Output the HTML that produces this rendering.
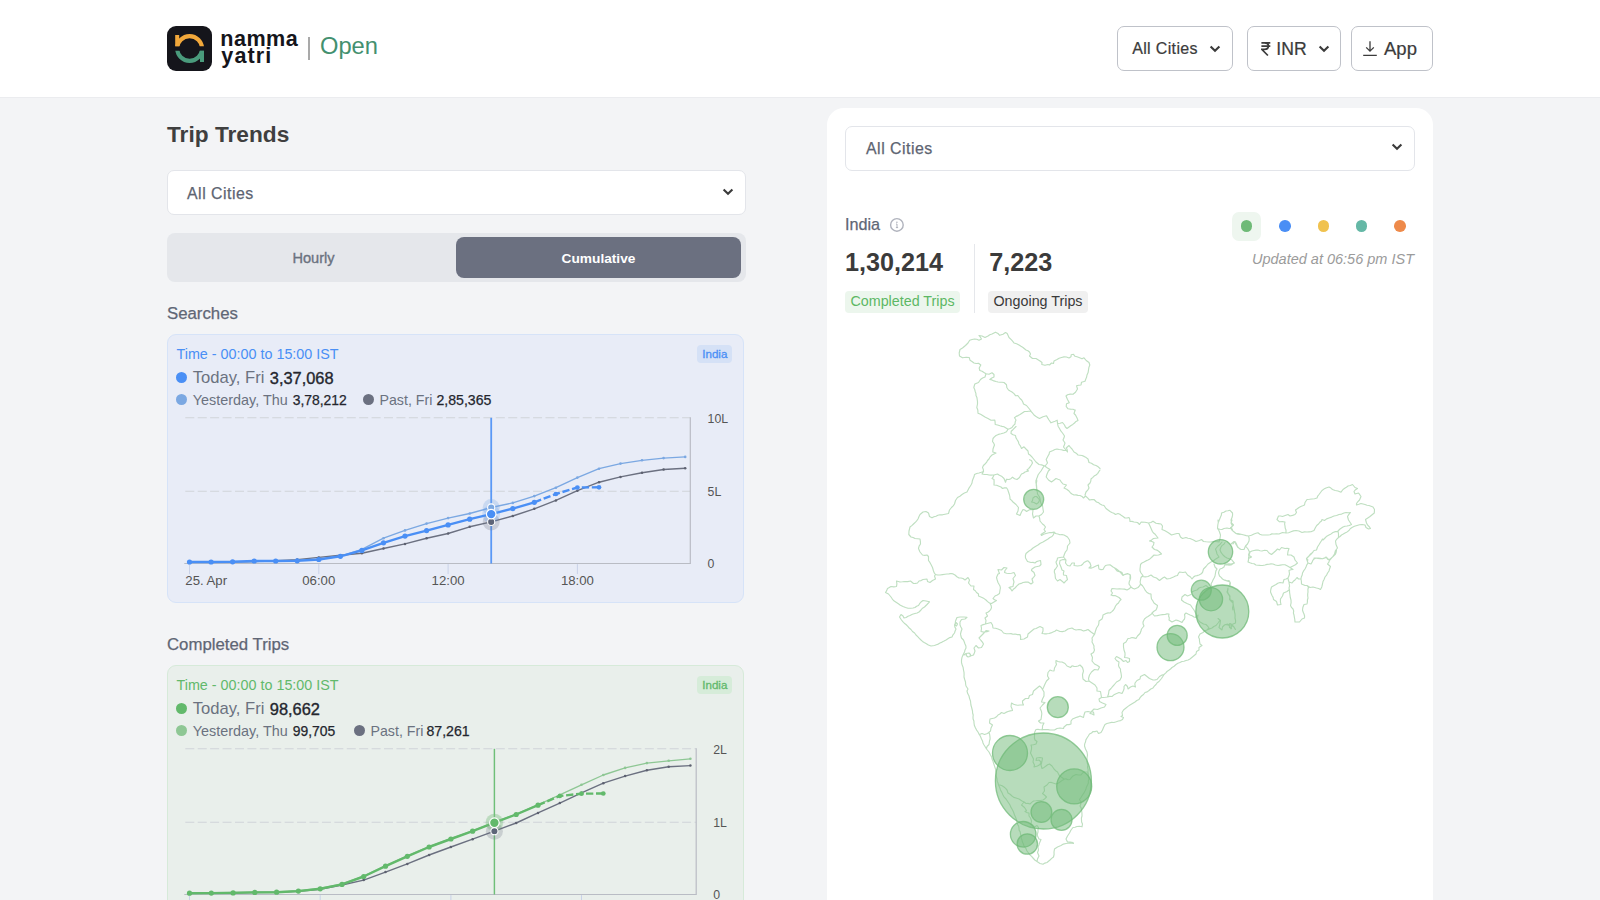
<!DOCTYPE html>
<html lang="en">
<head>
<meta charset="utf-8">
<title>Namma Yatri | Open</title>
<style>
*{box-sizing:border-box;margin:0;padding:0}
html,body{width:1600px;height:900px;overflow:hidden;background:#f3f4f6;font-family:"Liberation Sans",sans-serif;color:#3a3a3a}
#root{position:relative;width:1600px;height:900px;overflow:hidden;background:#f3f4f6}
.abs{position:absolute}
.hdr{position:absolute;left:0;top:0;width:1600px;height:98px;background:#fff;border-bottom:1px solid #ebecef}
.logo{position:absolute;left:167px;top:26px;width:45px;height:45px;border-radius:9px;background:#15151b}
.brand{position:absolute;left:220.3px;font-weight:bold;color:#15151b;font-size:21.6px;line-height:22px;letter-spacing:0.45px;white-space:nowrap}
.hbtn{position:absolute;top:26px;height:45px;border:1.5px solid #bfc2c9;border-radius:7px;background:#fff}
.hbtn span{position:absolute;white-space:nowrap;color:#3b3b3b;-webkit-text-stroke:0.22px #3b3b3b}
.sel{position:absolute;height:45px;background:#fff;border:1px solid #e3e5ea;border-radius:7px}
.sel span{position:absolute;left:19px;top:12.6px;font-size:15.9px;line-height:19px;color:#5d6472;white-space:nowrap;letter-spacing:0.5px;-webkit-text-stroke:0.25px #5d6472}
.lbl{position:absolute;left:167px;font-size:16.8px;line-height:20px;color:#5f6675;white-space:nowrap;-webkit-text-stroke:0.25px #5f6675}
.card{position:absolute;left:167px;width:578px;border-radius:9px}
.t{position:absolute;white-space:nowrap}
.dot{position:absolute;width:11px;height:11px;border-radius:50%}
</style>
</head>
<body>
<div id="root">
<!-- HEADER -->
<div class="hdr">
  <div class="logo">
    <svg width="45" height="45" viewBox="0 0 45 45">
      <defs><clipPath id="ct"><rect x="0" y="0" width="45" height="20.2"/></clipPath><clipPath id="cb"><rect x="0" y="24.8" width="45" height="21"/></clipPath></defs>
      <circle cx="22.6" cy="22.5" r="12.4" fill="none" stroke="#f2a83b" stroke-width="4.1" clip-path="url(#ct)"/>
      <rect x="8.2" y="9" width="4" height="11.2" fill="#f2a83b"/>
      <circle cx="22.6" cy="22.5" r="12.4" fill="none" stroke="#4a9b7c" stroke-width="4.1" clip-path="url(#cb)"/>
      <rect x="33" y="24.8" width="4" height="11.2" fill="#4a9b7c"/>
    </svg>
  </div>
  <div class="brand" style="top:28.3px">namma</div>
  <div class="brand" style="top:45.1px;left:221.3px;letter-spacing:1.1px">yatri</div>
  <div class="abs" style="left:308px;top:37px;width:2px;height:23px;background:#a9a9a9"></div>
  <div class="t" style="left:320px;top:31.6px;font-size:23.7px;line-height:28px;color:#43906f">Open</div>

  <div class="hbtn" style="left:1117px;width:116px">
    <span style="left:14.2px;top:11.6px;font-size:16px;line-height:20px;letter-spacing:0.35px">All Cities</span>
    <svg class="abs" style="left:90px;top:17px" width="14" height="10" viewBox="0 0 14 10"><path d="M2.6 2.4 L7 6.8 L11.4 2.4" fill="none" stroke="#3b3b3b" stroke-width="2.1"/></svg>
  </div>
  <div class="hbtn" style="left:1247px;width:94px">
    <svg class="abs" style="left:12.6px;top:15.1px" width="10" height="14.5" viewBox="0 0 10 14.5"><path d="M0.4 0.9 H9.3 M0.4 4 H9.3 M0.4 0.9 H3.4 C6 0.9 7.4 2.2 7.4 4 C7.4 6 5.8 7.3 3.4 7.3 H0.7 L6.9 13.5" fill="none" stroke="#3b3b3b" stroke-width="1.75"/></svg>
    <span style="left:28.3px;top:11.2px;font-size:17.6px;line-height:22px">INR</span>
    <svg class="abs" style="left:69px;top:17px" width="14" height="10" viewBox="0 0 14 10"><path d="M2.6 2.4 L7 6.8 L11.4 2.4" fill="none" stroke="#3b3b3b" stroke-width="2.1"/></svg>
  </div>
  <div class="hbtn" style="left:1351px;width:82px">
    <svg class="abs" style="left:10.2px;top:13.4px" width="16" height="17" viewBox="0 0 16 17"><path d="M8 1.2 V11 M4.2 7.4 L8 11.2 L11.8 7.4 M1.2 15.4 H14.8" fill="none" stroke="#3b3b3b" stroke-width="1.3"/></svg>
    <span style="left:32px;top:11px;font-size:18.5px;line-height:22px">App</span>
  </div>
</div>

<!-- LEFT COLUMN -->
<div class="t" style="left:167px;top:120px;font-size:22.7px;line-height:28px;font-weight:bold;color:#3f3f3f">Trip Trends</div>
<div class="sel" style="left:167px;top:170px;width:579px">
  <span>All Cities</span>
  <svg class="abs" style="left:552.6px;top:15.8px" width="14" height="10" viewBox="0 0 14 10"><path d="M2.6 2.4 L7 6.8 L11.4 2.4" fill="none" stroke="#3b3b3b" stroke-width="2.1"/></svg>
</div>
<div class="abs" style="left:167px;top:233px;width:579px;height:49px;border-radius:8px;background:#e5e7eb">
  <div class="t" style="left:0;top:17px;width:293px;text-align:center;font-size:14.6px;line-height:17px;color:#6b7280;-webkit-text-stroke:0.35px #6b7280">Hourly</div>
  <div class="abs" style="left:289px;top:4px;width:285px;height:41px;border-radius:8px;background:#6b7080"></div>
  <div class="t" style="left:289px;top:17px;width:285px;text-align:center;font-size:13.7px;line-height:17px;font-weight:bold;color:#fff">Cumulative</div>
</div>

<div class="lbl" style="top:303.8px">Searches</div>
<!-- CHART1 -->
<div class="card" style="left:167px;top:334px;width:577px;height:268.5px;background:#e8ecf7;border:1px solid #d6e3f8">
<div class="t" style="left:8.5px;top:10.5px;font-size:14.35px;line-height:17px;color:#4a8ff5">Time - 00:00 to 15:00 IST</div>
<div class="t" style="left:529.3px;top:10px;width:35px;height:18px;border-radius:4px;background:#d5e1f6;text-align:center;font-size:11.6px;line-height:18px;color:#4a8ff5;-webkit-text-stroke:0.3px #4a8ff5">India</div>
<div class="dot" style="left:7.7px;top:36.5px;background:#4a8ff5"></div>
<div class="t" style="left:24.8px;top:33px;font-size:16.6px;line-height:20px;color:#6b7280">Today, Fri</div>
<div class="t" style="left:101.8px;top:33px;font-size:16.4px;line-height:20px;color:#24262e;-webkit-text-stroke:0.35px #24262e">3,37,068</div>
<div class="dot" style="left:7.7px;top:59px;background:#7ba8e2"></div>
<div class="t" style="left:24.8px;top:56.5px;font-size:14.4px;line-height:17px;color:#6b7280">Yesterday, Thu</div>
<div class="t" style="left:124.7px;top:56.5px;font-size:13.9px;line-height:17px;color:#24262e;-webkit-text-stroke:0.25px #24262e">3,78,212</div>
<div class="dot" style="left:195.3px;top:59px;background:#6b7080"></div>
<div class="t" style="left:211.5px;top:56.5px;font-size:14.2px;line-height:17px;color:#6b7280">Past, Fri</div>
<div class="t" style="left:268.5px;top:56.5px;font-size:14.1px;line-height:17px;color:#24262e;-webkit-text-stroke:0.25px #24262e">2,85,365</div>
<svg class="abs" style="left:-1px;top:-1px" width="577" height="268.5" viewBox="0 0 577 268.5">
<path d="M18.3 83.8 H523.3 M18.3 157.3 H523.3" stroke="#d0d3d9" stroke-width="1.1" stroke-dasharray="9 3.42" fill="none"/>
<path d="M17.3 229.5 H523.3" stroke="#b9bcc4" stroke-width="1.2" fill="none"/>
<path d="M523.3 83.3 V230.0" stroke="#b9bcc4" stroke-width="1.2" fill="none"/>
<path d="M22.5 230.1 v10M151.8 230.1 v10M281.1 230.1 v10M410.4 230.1 v10" stroke="#c9d2e8" stroke-width="1" fill="none"/>
<path d="M324.2 83.8 V229.5" stroke="#4a8ff5" stroke-width="1.8" opacity="0.9" fill="none"/>
<polyline points="22.5,228.3 44.1,228.2 65.6,228.0 87.2,227.5 108.7,226.6 130.2,225.6 151.8,223.4 173.4,221.3 194.9,219.2 216.5,214.5 238.0,209.9 259.6,204.2 281.1,199.5 302.7,192.8 324.2,187.9 345.8,182.0 367.3,174.8 388.9,166.4 410.4,156.7 432.0,148.2 453.5,142.9 475.0,138.7 496.6,135.5 518.2,134.3" fill="none" stroke="#6b7080" stroke-width="1.4" stroke-linejoin="round"/>
<g fill="#5d6170"><circle cx="22.5" cy="228.3" r="1.25"/><circle cx="44.1" cy="228.2" r="1.25"/><circle cx="65.6" cy="228.0" r="1.25"/><circle cx="87.2" cy="227.5" r="1.25"/><circle cx="108.7" cy="226.6" r="1.25"/><circle cx="130.2" cy="225.6" r="1.25"/><circle cx="151.8" cy="223.4" r="1.25"/><circle cx="173.4" cy="221.3" r="1.25"/><circle cx="194.9" cy="219.2" r="1.25"/><circle cx="216.5" cy="214.5" r="1.25"/><circle cx="238.0" cy="209.9" r="1.25"/><circle cx="259.6" cy="204.2" r="1.25"/><circle cx="281.1" cy="199.5" r="1.25"/><circle cx="302.7" cy="192.8" r="1.25"/><circle cx="324.2" cy="187.9" r="1.25"/><circle cx="345.8" cy="182.0" r="1.25"/><circle cx="367.3" cy="174.8" r="1.25"/><circle cx="388.9" cy="166.4" r="1.25"/><circle cx="410.4" cy="156.7" r="1.25"/><circle cx="432.0" cy="148.2" r="1.25"/><circle cx="453.5" cy="142.9" r="1.25"/><circle cx="475.0" cy="138.7" r="1.25"/><circle cx="496.6" cy="135.5" r="1.25"/><circle cx="518.2" cy="134.3" r="1.25"/></g>
<polyline points="22.5,228.3 44.1,228.2 65.6,228.0 87.2,227.6 108.7,227.2 130.2,226.6 151.8,225.3 173.4,222.2 194.9,215.4 216.5,204.2 238.0,196.4 259.6,189.6 281.1,184.1 302.7,179.5 324.2,173.5 345.8,168.9 367.3,162.1 388.9,153.7 410.4,143.6 432.0,134.7 453.5,129.6 475.0,126.3 496.6,124.1 518.2,122.9" fill="none" stroke="#7ba8e2" stroke-width="1.35" stroke-linejoin="round"/>
<g fill="#7ba8e2"><circle cx="22.5" cy="228.3" r="1.3"/><circle cx="44.1" cy="228.2" r="1.3"/><circle cx="65.6" cy="228.0" r="1.3"/><circle cx="87.2" cy="227.6" r="1.3"/><circle cx="108.7" cy="227.2" r="1.3"/><circle cx="130.2" cy="226.6" r="1.3"/><circle cx="151.8" cy="225.3" r="1.3"/><circle cx="173.4" cy="222.2" r="1.3"/><circle cx="194.9" cy="215.4" r="1.3"/><circle cx="216.5" cy="204.2" r="1.3"/><circle cx="238.0" cy="196.4" r="1.3"/><circle cx="259.6" cy="189.6" r="1.3"/><circle cx="281.1" cy="184.1" r="1.3"/><circle cx="302.7" cy="179.5" r="1.3"/><circle cx="324.2" cy="173.5" r="1.3"/><circle cx="345.8" cy="168.9" r="1.3"/><circle cx="367.3" cy="162.1" r="1.3"/><circle cx="388.9" cy="153.7" r="1.3"/><circle cx="410.4" cy="143.6" r="1.3"/><circle cx="432.0" cy="134.7" r="1.3"/><circle cx="453.5" cy="129.6" r="1.3"/><circle cx="475.0" cy="126.3" r="1.3"/><circle cx="496.6" cy="124.1" r="1.3"/><circle cx="518.2" cy="122.9" r="1.3"/></g>
<polyline points="22.5,228.0 44.1,228.0 65.6,227.8 87.2,227.0 108.7,227.0 130.2,226.8 151.8,225.5 173.4,222.3 194.9,216.4 216.5,208.8 238.0,202.1 259.6,196.6 281.1,190.9 302.7,185.2 324.2,180.1 345.8,174.6 367.3,168.3" fill="none" stroke="#4a8ff5" stroke-width="2.4" stroke-linejoin="round" stroke-linecap="round"/>
<polyline points="367.3,168.3 388.9,160.0 410.4,153.5 432.0,153.3" fill="none" stroke="#4a8ff5" stroke-width="2.4" stroke-dasharray="7.3 2.7" stroke-linejoin="round"/>
<g fill="#4a8ff5"><circle cx="22.5" cy="228.0" r="2.6"/><circle cx="44.1" cy="228.0" r="2.6"/><circle cx="65.6" cy="227.8" r="2.6"/><circle cx="87.2" cy="227.0" r="2.6"/><circle cx="108.7" cy="227.0" r="2.6"/><circle cx="130.2" cy="226.8" r="2.6"/><circle cx="151.8" cy="225.5" r="2.6"/><circle cx="173.4" cy="222.3" r="2.6"/><circle cx="194.9" cy="216.4" r="2.6"/><circle cx="216.5" cy="208.8" r="2.6"/><circle cx="238.0" cy="202.1" r="2.6"/><circle cx="259.6" cy="196.6" r="2.6"/><circle cx="281.1" cy="190.9" r="2.6"/><circle cx="302.7" cy="185.2" r="2.6"/><circle cx="324.2" cy="180.1" r="2.6"/><circle cx="345.8" cy="174.6" r="2.6"/><circle cx="367.3" cy="168.3" r="2.6"/><circle cx="388.9" cy="160.0" r="2.35"/><circle cx="410.4" cy="153.5" r="2.35"/><circle cx="432.0" cy="153.3" r="2.35"/></g>
<circle cx="324.2" cy="173.5" r="8.5" fill="#7ba8e2" opacity="0.28"/>
<circle cx="324.2" cy="187.9" r="8.5" fill="#6b7080" opacity="0.25"/>
<circle cx="324.2" cy="180.1" r="9" fill="#4a8ff5" opacity="0.18"/>
<circle cx="324.2" cy="173.5" r="3.6" fill="#7ba8e2" stroke="#fff" stroke-width="1.1"/>
<circle cx="324.2" cy="187.9" r="3.6" fill="#5d6478" stroke="#fff" stroke-width="1.1"/>
<circle cx="324.2" cy="180.1" r="4.8" fill="#4a8ff5" stroke="#fff" stroke-width="1.2"/>
<g font-family="Liberation Sans, sans-serif" font-size="13.2" fill="#555">
<text x="540.6" y="89.2" font-size="12.3">10L</text>
<text x="540.6" y="161.7" font-size="12.3">5L</text>
<text x="540.6" y="233.9" font-size="12.3">0</text>
<text x="18.3" y="250.9">25. Apr</text>
<text x="151.8" y="250.9" text-anchor="middle">06:00</text>
<text x="281.1" y="250.9" text-anchor="middle">12:00</text>
<text x="410.4" y="250.9" text-anchor="middle">18:00</text>
</g></svg></div>
<!-- /CHART1 -->
<div class="lbl" style="top:634.8px">Completed Trips</div>
<!-- CHART2 -->
<div class="card" style="left:167px;top:665px;width:577px;height:268.5px;background:#e9efeb;border:1px solid #d6ead9">
<div class="t" style="left:8.5px;top:10.5px;font-size:14.35px;line-height:17px;color:#62b96b">Time - 00:00 to 15:00 IST</div>
<div class="t" style="left:529.3px;top:10px;width:35px;height:18px;border-radius:4px;background:#d6ecd9;text-align:center;font-size:11.6px;line-height:18px;color:#62b96b;-webkit-text-stroke:0.3px #62b96b">India</div>
<div class="dot" style="left:7.7px;top:36.5px;background:#62b96b"></div>
<div class="t" style="left:24.8px;top:33px;font-size:16.6px;line-height:20px;color:#6b7280">Today, Fri</div>
<div class="t" style="left:101.8px;top:33px;font-size:16.4px;line-height:20px;color:#24262e;-webkit-text-stroke:0.35px #24262e">98,662</div>
<div class="dot" style="left:7.7px;top:59px;background:#8ec794"></div>
<div class="t" style="left:24.8px;top:56.5px;font-size:14.4px;line-height:17px;color:#6b7280">Yesterday, Thu</div>
<div class="t" style="left:124.7px;top:56.5px;font-size:13.9px;line-height:17px;color:#24262e;-webkit-text-stroke:0.25px #24262e">99,705</div>
<div class="dot" style="left:186.3px;top:59px;background:#6b7080"></div>
<div class="t" style="left:202.5px;top:56.5px;font-size:14.2px;line-height:17px;color:#6b7280">Past, Fri</div>
<div class="t" style="left:258.5px;top:56.5px;font-size:14.1px;line-height:17px;color:#24262e;-webkit-text-stroke:0.25px #24262e">87,261</div>
<svg class="abs" style="left:-1px;top:-1px" width="577" height="268.5" viewBox="0 0 577 268.5">
<path d="M18.3 83.8 H529.2 M18.3 157.3 H529.2" stroke="#d0d3d9" stroke-width="1.1" stroke-dasharray="9 3.42" fill="none"/>
<path d="M17.3 229.5 H529.2" stroke="#b9bcc4" stroke-width="1.2" fill="none"/>
<path d="M529.2 83.3 V230.0" stroke="#b9bcc4" stroke-width="1.2" fill="none"/>
<path d="M22.5 230.1 v10M153.2 230.1 v10M283.9 230.1 v10M414.5 230.1 v10" stroke="#c9d2e8" stroke-width="1" fill="none"/>
<path d="M327.4 83.8 V229.5" stroke="#62b96b" stroke-width="1.45" opacity="0.9" fill="none"/>
<polyline points="22.5,228.3 44.3,228.2 66.1,228.0 87.8,227.6 109.6,227.3 131.4,226.3 153.2,224.2 175.0,220.0 196.7,215.1 218.5,207.1 240.3,198.9 262.1,190.0 283.9,182.0 305.6,174.2 327.4,166.2 349.2,158.0 371.0,147.9 392.8,138.1 414.5,127.8 436.3,118.2 458.1,111.1 479.9,105.2 501.7,101.7 523.4,100.6" fill="none" stroke="#6b7080" stroke-width="1.4" stroke-linejoin="round"/>
<g fill="#5d6170"><circle cx="22.5" cy="228.3" r="1.25"/><circle cx="44.3" cy="228.2" r="1.25"/><circle cx="66.1" cy="228.0" r="1.25"/><circle cx="87.8" cy="227.6" r="1.25"/><circle cx="109.6" cy="227.3" r="1.25"/><circle cx="131.4" cy="226.3" r="1.25"/><circle cx="153.2" cy="224.2" r="1.25"/><circle cx="175.0" cy="220.0" r="1.25"/><circle cx="196.7" cy="215.1" r="1.25"/><circle cx="218.5" cy="207.1" r="1.25"/><circle cx="240.3" cy="198.9" r="1.25"/><circle cx="262.1" cy="190.0" r="1.25"/><circle cx="283.9" cy="182.0" r="1.25"/><circle cx="305.6" cy="174.2" r="1.25"/><circle cx="327.4" cy="166.2" r="1.25"/><circle cx="349.2" cy="158.0" r="1.25"/><circle cx="371.0" cy="147.9" r="1.25"/><circle cx="392.8" cy="138.1" r="1.25"/><circle cx="414.5" cy="127.8" r="1.25"/><circle cx="436.3" cy="118.2" r="1.25"/><circle cx="458.1" cy="111.1" r="1.25"/><circle cx="479.9" cy="105.2" r="1.25"/><circle cx="501.7" cy="101.7" r="1.25"/><circle cx="523.4" cy="100.6" r="1.25"/></g>
<polyline points="22.5,227.8 44.3,227.7 66.1,227.5 87.8,227.0 109.6,226.8 131.4,225.7 153.2,223.4 175.0,219.0 196.7,211.1 218.5,200.8 240.3,190.9 262.1,181.6 283.9,173.6 305.6,165.8 327.4,157.3 349.2,149.1 371.0,139.8 392.8,129.8 414.5,119.8 436.3,110.0 458.1,102.9 479.9,98.1 501.7,95.8 523.4,93.8" fill="none" stroke="#8ec794" stroke-width="1.35" stroke-linejoin="round"/>
<g fill="#8ec794"><circle cx="22.5" cy="227.8" r="1.3"/><circle cx="44.3" cy="227.7" r="1.3"/><circle cx="66.1" cy="227.5" r="1.3"/><circle cx="87.8" cy="227.0" r="1.3"/><circle cx="109.6" cy="226.8" r="1.3"/><circle cx="131.4" cy="225.7" r="1.3"/><circle cx="153.2" cy="223.4" r="1.3"/><circle cx="175.0" cy="219.0" r="1.3"/><circle cx="196.7" cy="211.1" r="1.3"/><circle cx="218.5" cy="200.8" r="1.3"/><circle cx="240.3" cy="190.9" r="1.3"/><circle cx="262.1" cy="181.6" r="1.3"/><circle cx="283.9" cy="173.6" r="1.3"/><circle cx="305.6" cy="165.8" r="1.3"/><circle cx="327.4" cy="157.3" r="1.3"/><circle cx="349.2" cy="149.1" r="1.3"/><circle cx="371.0" cy="139.8" r="1.3"/><circle cx="392.8" cy="129.8" r="1.3"/><circle cx="414.5" cy="119.8" r="1.3"/><circle cx="436.3" cy="110.0" r="1.3"/><circle cx="458.1" cy="102.9" r="1.3"/><circle cx="479.9" cy="98.1" r="1.3"/><circle cx="501.7" cy="95.8" r="1.3"/><circle cx="523.4" cy="93.8" r="1.3"/></g>
<polyline points="22.5,228.2 44.3,228.1 66.1,227.9 87.8,227.4 109.6,227.2 131.4,226.1 153.2,223.8 175.0,219.4 196.7,211.5 218.5,201.2 240.3,191.3 262.1,182.0 283.9,174.0 305.6,166.2 327.4,157.7 349.2,149.5 371.0,140.2" fill="none" stroke="#62b96b" stroke-width="2.4" stroke-linejoin="round" stroke-linecap="round"/>
<polyline points="371.0,140.2 392.8,131.0 414.5,128.7 436.3,128.5" fill="none" stroke="#62b96b" stroke-width="2.4" stroke-dasharray="7.3 2.7" stroke-linejoin="round"/>
<g fill="#62b96b"><circle cx="22.5" cy="228.2" r="2.6"/><circle cx="44.3" cy="228.1" r="2.6"/><circle cx="66.1" cy="227.9" r="2.6"/><circle cx="87.8" cy="227.4" r="2.6"/><circle cx="109.6" cy="227.2" r="2.6"/><circle cx="131.4" cy="226.1" r="2.6"/><circle cx="153.2" cy="223.8" r="2.6"/><circle cx="175.0" cy="219.4" r="2.6"/><circle cx="196.7" cy="211.5" r="2.6"/><circle cx="218.5" cy="201.2" r="2.6"/><circle cx="240.3" cy="191.3" r="2.6"/><circle cx="262.1" cy="182.0" r="2.6"/><circle cx="283.9" cy="174.0" r="2.6"/><circle cx="305.6" cy="166.2" r="2.6"/><circle cx="327.4" cy="157.7" r="2.6"/><circle cx="349.2" cy="149.5" r="2.6"/><circle cx="371.0" cy="140.2" r="2.6"/><circle cx="392.8" cy="131.0" r="2.35"/><circle cx="414.5" cy="128.7" r="2.35"/><circle cx="436.3" cy="128.5" r="2.35"/></g>
<circle cx="327.4" cy="157.3" r="8.5" fill="#8ec794" opacity="0.28"/>
<circle cx="327.4" cy="166.2" r="8.5" fill="#6b7080" opacity="0.25"/>
<circle cx="327.4" cy="157.7" r="9" fill="#62b96b" opacity="0.18"/>
<circle cx="327.4" cy="157.3" r="3.6" fill="#8ec794" stroke="#fff" stroke-width="1.1"/>
<circle cx="327.4" cy="166.2" r="3.6" fill="#5d6478" stroke="#fff" stroke-width="1.1"/>
<circle cx="327.4" cy="157.7" r="4.8" fill="#62b96b" stroke="#fff" stroke-width="1.2"/>
<g font-family="Liberation Sans, sans-serif" font-size="13.2" fill="#555">
<text x="546.2" y="89.2" font-size="12.3">2L</text>
<text x="546.2" y="161.7" font-size="12.3">1L</text>
<text x="546.2" y="233.9" font-size="12.3">0</text>
<text x="18.3" y="250.9">25. Apr</text>
<text x="153.2" y="250.9" text-anchor="middle">06:00</text>
<text x="283.9" y="250.9" text-anchor="middle">12:00</text>
<text x="414.5" y="250.9" text-anchor="middle">18:00</text>
</g></svg></div>
<!-- /CHART2 -->

<!-- RIGHT PANEL -->
<div class="abs" style="left:827px;top:107.5px;width:606px;height:820px;border-radius:17px;background:#fff"></div>
<div class="sel" style="left:845px;top:125.5px;width:570px">
  <span style="left:20px">All Cities</span>
  <svg class="abs" style="left:543.8px;top:15.8px" width="14" height="10" viewBox="0 0 14 10"><path d="M2.6 2.4 L7 6.8 L11.4 2.4" fill="none" stroke="#3b3b3b" stroke-width="2.1"/></svg>
</div>
<div class="t" style="left:845px;top:214px;font-size:16.2px;line-height:20px;color:#5f6675;-webkit-text-stroke:0.25px #5f6675">India</div>
<svg class="abs" style="left:889px;top:217.2px" width="16" height="16" viewBox="0 0 16 16"><circle cx="7.9" cy="7.9" r="6.3" fill="none" stroke="#b0b3bd" stroke-width="1.4"/><path d="M8 7 V10.4 M7.1 7 H8 M6.9 10.6 H9.1" stroke="#a7aab4" stroke-width="0.9" fill="none"/><circle cx="7.9" cy="5.2" r="0.7" fill="#a7aab4"/></svg>
<div class="t" style="left:845px;top:247px;font-size:25.2px;line-height:30px;font-weight:bold;color:#3b3b3b">1,30,214</div>
<div class="abs" style="left:974px;top:244px;width:1px;height:69px;background:#e5e7eb"></div>
<div class="t" style="left:989.3px;top:247px;font-size:25.2px;line-height:30px;font-weight:bold;color:#3b3b3b">7,223</div>
<div class="t" style="left:845px;top:291px;height:21.5px;width:115px;border-radius:4px;background:#ecf6ed;text-align:center;font-size:14.3px;line-height:21.5px;color:#5cb864">Completed Trips</div>
<div class="t" style="left:988px;top:291px;height:21.5px;width:100px;border-radius:4px;background:#f0f0f0;text-align:center;font-size:14.3px;line-height:21.5px;color:#3a3a3a">Ongoing Trips</div>

<div class="abs" style="left:1232px;top:211.5px;width:29px;height:29px;border-radius:7px;background:#eef6ef"></div>
<div class="abs" style="left:1240.7px;top:220.2px;width:11.6px;height:11.6px;border-radius:50%;background:#6fba77"></div>
<div class="abs" style="left:1279.1px;top:220.2px;width:11.6px;height:11.6px;border-radius:50%;background:#4a8ef5"></div>
<div class="abs" style="left:1317.5px;top:220.2px;width:11.6px;height:11.6px;border-radius:50%;background:#f0c24f"></div>
<div class="abs" style="left:1355.9px;top:220.2px;width:11.6px;height:11.6px;border-radius:50%;background:#65b8a6"></div>
<div class="abs" style="left:1394.4px;top:220.2px;width:11.6px;height:11.6px;border-radius:50%;background:#ee8a4a"></div>
<div class="t" style="right:186px;top:250px;font-size:14.5px;line-height:18px;font-style:italic;color:#9b9b9b">Updated at 06:56 pm IST</div>

<!-- MAP -->
<svg class="abs" style="left:845px;top:320px" width="590" height="580" viewBox="0 0 590 580">
<path d="M114.5 36.0 L114.2 33.0 L115.0 29.5 L117.5 28.0 L120.5 25.5 L123.0 23.0 L124.7 20.2 L127.1 19.5 L129.5 19.0 L131.8 19.3 L134.0 20.2 L136.5 19.0 L135.4 17.2 L134.0 15.5 L137.0 16.0 L140.0 17.5 L143.0 16.0 L144.8 14.7 L147.0 14.0 L150.5 12.2 L153.0 13.5 L154.7 15.3 L158.0 14.2 L160.5 12.5 L162.2 13.5 L163.1 15.5 L164.0 17.5 L166.5 19.8 L167.8 21.3 L169.0 23.0 L171.6 23.7 L174.0 25.0 L176.0 26.3 L178.0 27.5 L181.0 30.0 L182.9 30.7 L184.5 32.0 L185.5 34.0 L184.5 36.0 L187.5 38.5 L191.0 38.5 L193.0 39.7 L195.0 41.0 L197.0 42.5 L196.8 44.5 L200.0 45.3 L203.0 44.5 L204.5 45.0 L206.5 43.0 L208.5 43.5 L209.0 41.0 L212.0 39.5 L214.1 38.2 L216.5 37.5 L219.0 36.9 L221.5 37.0 L224.0 38.0 L226.0 36.8 L226.2 34.8 L228.5 34.3 L230.0 36.3 L232.0 36.8 L234.0 37.5 L237.0 38.8 L239.0 37.8 L241.2 40.5 L244.0 42.5 L244.8 45.0 L243.9 47.4 L243.5 50.0 L243.1 52.6 L242.0 55.0 L241.6 57.1 L240.8 59.0 L240.0 61.2 L236.5 62.2 L236.0 65.0 L233.7 65.2 L231.5 65.7 L232.5 69.0 L230.5 72.2 L228.0 74.3 L225.2 74.1 L222.5 74.7 L221.0 76.0 L222.5 79.5 L224.3 82.8 L221.5 83.8 L221.2 86.5 L223.0 88.8 L225.5 89.1 L228.0 89.3 L230.2 90.3M114.5 36.0 L117.5 37.8 L121.2 37.2 L124.2 37.5 L125.0 40.2 L127.0 41.5 L129.0 43.0 L131.2 43.5 L133.5 43.3 L135.8 45.0 L134.2 48.0 L134.8 50.5 L137.1 51.2 L139.0 52.5 L141.0 53.7M141.0 53.7 L140.0 57.0 L137.6 58.0 L135.5 59.5 L133.5 62.5 L129.8 64.0 L128.8 67.5 L129.7 69.4 L130.2 71.5 L130.9 73.4 L131.0 75.5 L131.9 77.4 L132.2 79.5 L132.5 81.7 L132.5 84.0 L131.8 87.5M141.0 53.7 L144.0 54.2 L147.0 52.8 L149.0 54.5 L149.0 57.0 L146.8 58.0 L144.8 59.5 L146.9 59.9 L148.9 60.9 L151.0 61.5 L153.0 62.0 L155.0 62.2 L157.0 62.2 L159.0 62.5 L161.5 64.7 L161.8 67.5 L163.5 70.0 L165.2 71.0 L167.0 72.0 L169.0 73.6 L170.5 75.7 L172.8 75.5 L175.0 78.5 L176.7 80.0 L177.8 82.0 L178.5 84.0 L181.5 85.5 L184.0 88.5 L186.0 91.0M131.8 87.5 L132.8 90.0 L133.0 93.2 L135.6 94.3 L138.0 95.8 L140.4 97.3 L143.0 98.5 L146.0 100.2 L149.8 100.0 L150.1 102.2 L150.2 104.5 L152.6 105.0 L155.0 105.8 L157.0 106.4 L159.0 106.8 L161.0 108.0 L163.0 109.2 L161.5 111.8 L158.8 113.0 L156.0 113.8 L153.4 114.4 L151.0 115.5 L149.4 116.9 L148.0 118.5 L147.5 121.5 L148.7 123.1 L149.5 125.0 L148.7 127.0 L148.0 129.0 L147.8 132.0 L151.0 133.0 L149.0 134.0 L147.0 135.0 L145.2 136.8 L144.0 139.0 L142.5 140.5 L141.5 142.4 L140.0 144.0 L138.4 145.5 L137.5 147.5 L138.3 149.4 L138.5 151.5 L136.3 152.3 L134.0 153.0 L131.7 153.5 L129.5 154.5 L129.0 156.8 L128.0 159.0 L127.3 161.0 L127.0 163.1 L126.0 165.0 L124.9 166.7 L123.8 168.4 L122.9 170.2 L122.0 172.0 L119.4 173.0 L117.0 174.5M185.5 91.0 L187.4 92.9 L189.0 95.0 L190.7 96.3 L192.6 97.4 L194.5 98.5 L198.0 96.8 L201.5 95.8 L202.7 97.9 L204.0 100.0 L206.0 102.8 L208.0 102.0 L210.0 101.2 L212.2 100.2 L212.5 103.5M212.5 103.5 L215.1 103.3 L217.5 102.5 L219.5 105.0 L220.4 107.0 L222.0 108.5 L224.0 107.0 L226.0 105.5 L227.8 104.4 L229.5 103.0 L231.0 101.4 L233.0 100.5 L232.3 98.6 L231.4 96.8 L230.5 95.0 L229.0 93.5 L230.2 90.0M212.5 103.5 L213.1 106.2 L214.5 108.5 L215.8 110.9 L217.5 113.0 L219.5 116.0 L218.9 118.1 L218.0 120.0 L220.0 123.0 L219.3 125.0 L218.5 127.0 L220.5 129.5 L222.5 132.0 L222.0 129.0 L221.2 128.0 L224.0 125.5 L225.4 127.3 L227.0 129.0 L229.0 132.0 L231.2 133.2 L233.0 135.0 L235.0 135.2 L237.0 135.5 L239.1 136.4 L241.2 137.6 L243.0 139.0 L244.0 142.5 L246.5 143.2 L248.6 144.7 L251.0 145.5 L253.2 146.8 L255.0 148.5M220.5 130.5 L218.5 130.4 L216.5 129.8 L214.2 129.5 L212.0 129.0 L209.9 129.5 L208.0 130.5 L204.5 132.0 L204.1 134.1 L203.0 136.0 L201.2 139.5 L202.5 143.0 L200.5 145.5M185.5 91.0 L182.0 91.5 L179.5 91.5 L177.3 93.0 L175.0 94.5 L173.1 95.6 L171.2 96.4 L169.5 97.8 L171.0 100.0 L170.2 101.9 L170.0 104.0 L168.3 105.6 L167.0 107.5 L165.1 108.5 L163.0 109.2M171.0 106.5 L169.4 108.1 L167.9 109.7 L166.2 111.2 L166.0 113.5 L168.1 114.8 L170.5 115.5 L170.9 117.6 L172.0 119.5 L173.3 121.6 L174.0 124.0 L175.5 126.1 L176.5 128.5 L179.0 126.8 L181.0 129.0 L183.0 131.0 L183.5 134.0 L185.4 135.3 L187.0 137.0 L189.0 139.5 L191.0 142.0 L194.0 144.5 L196.6 144.9 L199.0 145.7 L200.5 145.5M199.0 146.0 L197.5 148.5 L196.0 151.0 L194.4 153.0 L193.0 155.0 L192.4 157.1 L191.5 159.0 L191.8 161.0 L191.4 163.0 L191.2 165.0 L191.5 167.0 L191.5 169.0M200.0 146.2 L202.5 147.9 L205.0 149.5 L203.4 151.0 L202.5 153.0 L201.7 155.0 L201.2 157.0 L203.5 160.0 L206.5 162.0 L208.8 160.3 L211.0 158.5 L213.0 159.3 L215.0 160.0 L216.4 162.1 L218.0 164.0 L221.5 165.0 L219.0 168.0 L221.7 169.2 L224.0 171.0 L225.3 172.7 L227.0 174.0 L229.0 175.0M138.5 151.5 L137.0 154.0 L139.5 154.5 L142.0 154.5 L144.0 155.0 L146.0 155.1 L148.0 155.0 L149.0 155.0M184.5 139.8 L186.5 140.5 L187.5 143.0 L186.3 145.0 L185.0 147.0 L183.6 148.6 L182.0 150.0 L183.5 151.0 L180.0 152.0 L178.4 153.3 L176.5 154.0 L175.4 155.7 L174.5 157.5 L172.0 159.5 L169.6 158.7 L167.5 157.2 L165.9 158.7 L164.0 159.5 L161.5 159.2 L160.5 162.2 L159.0 158.5 L156.5 156.2 L154.4 155.3 L152.5 154.0 L149.0 155.0 L148.2 156.9 L147.0 158.5 L149.0 159.5 L149.1 162.2 L149.0 165.0 L151.6 165.2 L154.0 166.2 L156.0 167.0 L157.5 168.5 L159.4 167.9 L161.5 167.8 L162.8 169.8 L163.5 172.0 L164.5 175.0M255.0 150.0 L253.8 151.7 L252.6 153.6 L251.0 155.0 L249.1 156.1 L247.6 157.6 L246.0 159.0 L245.8 161.1 L245.0 163.0 L243.0 165.0 L244.0 168.0 L242.7 170.1 L241.0 172.0 L240.0 175.0M240.5 176.0 L242.6 177.9 L244.5 180.0 L246.7 179.6 L249.0 179.5 L251.5 182.0 L253.5 182.6 L255.1 184.0 L256.9 185.0 L259.0 185.5 L261.0 188.5 L263.0 190.0 L265.0 191.5 L266.8 192.5 L268.8 193.2 L270.5 194.5 L273.0 193.5 L274.9 194.3 L276.6 195.6 L278.4 196.7 L280.0 198.0 L282.0 198.0 L284.0 197.5 L284.8 199.4 L285.0 201.5 L287.0 201.4 L289.0 202.0 L292.5 202.5 L294.5 204.5 L296.2 202.0 L300.0 202.2 L303.5 203.0 L305.9 202.5 L308.0 201.2 L311.0 203.2 L313.5 203.6 L316.0 204.0 L317.5 206.0 L317.0 209.5M229.0 175.0 L231.0 174.9 L233.0 175.4 L235.0 175.5 L237.0 176.4 L238.5 178.0 L240.5 176.0M373.0 200.0 L373.5 202.0 L374.5 199.5 L375.5 197.0 L376.4 195.1 L376.5 193.0 L378.9 192.3 L381.0 191.0 L383.0 190.8 L385.0 190.3 L387.5 193.0 L387.6 195.0 L387.2 197.0 L386.0 200.0 L386.5 203.0 L388.5 205.0 L386.0 207.5 L387.5 209.5M317.0 209.5 L320.0 210.8 L323.0 212.5 L324.8 213.7 L326.5 215.0 L330.0 214.0 L332.0 213.5 L334.0 213.5 L335.5 217.0 L337.5 218.5 L341.0 217.5 L342.9 218.2 L345.0 218.5 L348.5 220.0 L351.0 221.5 L354.5 220.5 L356.5 219.5 L358.5 221.5 L361.2 221.8 L364.0 222.0 L366.0 222.0 L368.0 221.5 L370.0 221.5 L372.0 221.6 L374.0 222.0 L375.0 218.5 L375.5 215.0 L374.5 212.0 L373.7 210.1 L372.5 208.5 L372.8 205.0 L373.3 202.5 L373.0 200.0M372.5 208.5 L374.7 209.3 L377.0 209.5 L379.0 208.5 L382.0 208.0 L384.0 208.5 L386.0 208.5 L387.5 206.0 L386.0 203.0 L387.0 200.0M386.0 208.5 L388.0 211.0 L391.0 213.5 L392.9 214.3 L395.0 214.5M303.5 203.0 L305.0 206.0 L306.5 209.5 L307.3 211.3 L308.5 213.0 L310.2 214.3 L311.5 216.0 L313.0 218.0 L310.7 218.2 L308.5 218.5 L306.6 219.9 L304.5 221.0 L306.9 221.4 L309.0 222.5 L308.5 225.0 L307.0 227.0 L309.5 229.5 L311.9 230.1 L314.0 231.5 L316.5 234.0 L313.5 235.0 L311.2 235.2 L309.0 235.0 L306.5 237.5 L304.9 238.9 L303.0 240.0 L300.9 240.9 L299.0 242.0 L297.0 242.9 L295.5 244.5 L295.3 246.8 L295.0 249.0 L295.1 251.1 L296.0 253.0 L298.0 255.5 L296.0 257.5 L295.5 260.0 L295.1 262.0 L295.5 264.0M297.5 256.5 L300.2 256.9 L303.0 256.5 L306.0 255.0 L308.5 257.0 L311.5 258.0 L314.5 260.5 L316.1 259.2 L317.7 258.0 L319.5 257.0 L322.0 259.0 L325.0 258.5 L328.5 257.0 L330.4 256.0 L332.5 255.5 L333.3 253.6 L334.5 252.0 L338.0 252.5 L340.5 252.0 L342.5 255.0 L345.5 257.0 L347.0 259.0 L348.3 257.3 L350.0 256.0 L352.0 255.6 L354.0 255.0 L355.9 254.0 L357.5 252.5 L358.5 249.0 L361.0 246.5 L363.0 244.0 L366.0 242.0 L368.2 241.0 L370.0 239.5 L372.0 238.2 L374.0 237.0 L372.0 234.0 L371.4 231.5 L370.5 229.0 L373.0 226.0 L375.2 224.2 L377.0 222.0M380.0 222.5 L378.9 224.2 L377.2 225.4 L376.0 227.0 L375.0 230.0 L376.2 232.7 L378.0 235.0 L379.9 236.7 L382.0 238.0 L385.0 239.0 L387.0 240.0 L389.5 243.0 L386.0 244.0 L384.0 243.8 L382.0 244.0 L380.0 244.0 L379.0 247.0 L377.1 248.2 L375.0 249.0 L374.0 250.9 L373.5 253.0 L374.5 256.0 L376.1 257.4 L377.5 259.0 L379.6 260.2 L382.0 261.0 L385.0 262.0 L384.5 265.0M369.0 244.0 L370.0 247.0 L372.0 249.0 L370.9 250.9 L370.5 253.0 L370.0 256.0 L369.1 258.0 L368.0 260.0 L367.1 262.0 L366.0 264.0 L367.0 267.0M388.0 224.0 L390.0 221.5 L390.7 223.9 L392.0 226.0 L393.4 227.6 L395.0 229.0M295.5 264.0 L294.5 265.9 L293.0 267.5 L289.5 269.0 L287.6 268.3 L286.0 267.0 L284.0 264.0 L284.2 261.9 L285.0 260.0 L285.6 258.0 L285.5 256.0 L284.0 254.0 L282.0 254.0 L280.0 254.5 L277.5 255.0 L275.0 252.0 L272.0 251.0 L269.5 248.0M295.5 264.0 L297.5 265.8 L299.0 268.0 L300.3 270.4 L302.0 272.5 L303.9 273.6 L306.0 274.0 L306.1 276.5 L306.5 279.0 L307.9 280.9 L309.0 283.0 L310.7 284.3 L312.5 285.5 L312.0 287.8 L311.0 290.0M286.0 267.0 L284.2 268.8 L282.0 270.0 L279.6 269.1 L277.0 269.0 L274.5 268.9 L272.0 269.0 L269.5 268.7 L267.0 268.5 L266.0 271.0 L267.5 273.0 L266.0 275.0 L268.0 275.6 L270.0 275.5 L272.0 276.5 L274.0 277.5 L276.0 279.5 L274.5 281.1 L273.5 283.0 L271.8 284.3 L270.5 286.0 L269.7 288.1 L268.5 290.0M347.0 272.0 L349.4 270.8 L352.0 270.0 L354.0 268.0 L356.0 267.3 L358.0 267.0 L361.0 265.5 L364.0 268.0 L366.0 267.0M346.0 274.5 L342.5 276.0 L340.0 274.5 L337.0 277.0 L336.5 280.0 L339.0 282.0 L342.0 283.5 L345.5 285.0 L347.5 288.0 L349.0 290.0M383.0 268.0 L382.7 270.1 L382.0 272.0 L383.2 274.0 L384.5 276.0 L385.0 278.0 L385.0 280.0 L386.5 281.5 L388.0 283.0 L388.1 285.5 L387.5 288.0 L388.0 290.0M385.5 207.5 L386.5 209.5 L388.0 211.0 L391.0 213.5 L393.0 213.6 L395.0 214.0 L397.0 214.5 L399.0 215.0 L401.2 215.6 L403.5 216.0 L406.4 215.3 L409.0 214.0 L411.0 213.3 L413.0 212.8 L414.8 214.2 L417.0 215.0 L419.0 215.0 L421.0 215.0 L423.0 215.0 L425.0 214.7 L426.9 213.9 L429.0 214.0 L431.5 213.9 L434.0 214.0 L437.5 212.5 L441.0 213.0M441.0 213.0 L441.0 210.0 L440.2 208.1 L440.0 206.0 L439.6 204.0 L440.0 202.0 L437.3 201.6 L434.5 201.8 L432.0 199.5 L433.5 196.0 L435.5 196.0 L437.5 196.5 L440.2 195.5 L443.0 194.5 L445.0 196.0 L447.6 195.4 L450.0 194.5 L451.5 192.5 L450.5 190.0 L452.3 188.8 L454.0 187.5 L455.8 186.5 L457.7 185.8 L459.5 185.0 L460.0 182.5 L462.0 179.5 L464.5 179.3 L467.0 179.0 L469.5 178.7 L472.0 178.0 L472.7 176.1 L474.0 174.5 L475.5 172.5 L477.0 170.5 L478.9 169.1 L481.0 168.0 L484.0 167.0 L485.9 168.1 L487.5 169.5 L490.2 170.5 L493.0 171.0 L496.0 172.2 L498.0 169.5 L499.7 168.3 L501.4 167.2 L503.0 166.0 L505.3 165.5 L507.5 164.5 L510.0 167.5 L512.5 168.5 L510.5 169.7 L509.0 171.5 L510.0 174.0 L513.5 173.0 L514.8 174.7 L516.0 176.5 L514.5 180.0 L512.9 181.7 L511.5 183.5 L511.5 185.0 L513.8 184.3 L516.0 183.5 L518.0 184.0 L520.0 184.5 L522.0 185.2 L524.0 185.5 L526.0 186.2 L528.0 187.0 L529.5 189.5 L529.3 193.0 L527.1 194.7 L525.0 196.5 L522.8 198.0 L520.5 199.5 L521.5 203.0 L522.7 205.2 L524.5 207.0 L525.5 208.5 L523.5 209.0 L521.0 207.5 L520.0 205.0 L517.0 204.5 L514.5 204.8 L512.0 205.5 L509.4 206.2 L507.0 207.5 L505.2 208.7 L504.0 210.5 L502.1 211.9 L500.0 213.0 L498.3 214.1 L496.5 215.0 L495.0 216.5 L493.5 217.5M441.0 213.0 L443.6 212.7 L446.0 211.8 L448.4 210.9 L451.0 210.5 L454.0 211.0 L457.0 212.5 L459.5 211.9 L462.0 212.0 L464.0 211.9 L466.0 211.8 L469.0 210.5 L470.5 207.5 L471.7 205.5 L473.5 204.0 L474.8 202.3 L476.5 201.0 L477.0 199.5 L479.5 200.5 L481.6 198.9 L484.0 198.0 L486.6 197.1 L489.0 196.0 L491.6 195.5 L494.0 194.5 L496.6 194.1 L499.0 193.0 L501.1 192.5 L503.3 192.8 L505.5 192.5 L503.9 194.4 L502.5 196.5 L503.5 200.0 L505.5 203.0 L506.5 204.5 L504.3 205.5 L502.0 206.0 L499.9 206.2 L498.0 207.0 L495.0 209.0 L493.0 211.0 L493.5 214.0 L493.5 217.5M493.0 211.5 L490.4 211.6 L488.0 212.5 L486.1 213.9 L484.0 215.0 L481.8 216.2 L480.0 218.0 L478.0 220.0 L477.5 219.0 L476.3 221.0 L475.0 223.0 L473.8 225.0 L472.5 227.0 L471.5 230.0 L469.0 230.5 L467.0 233.0 L465.2 234.2 L464.0 236.0 L461.5 239.0 L463.0 240.0M493.5 217.5 L491.8 219.1 L490.5 221.0 L491.0 224.5 L492.5 228.0 L490.5 230.5 L489.5 234.0 L487.5 237.0 L485.0 240.0M469.0 239.0 L469.0 238.0 L471.0 238.0 L473.0 238.5 L475.3 238.6 L477.5 238.8 L480.0 238.0 L481.0 237.0 L483.0 239.0 L485.0 239.5M403.5 238.0 L404.0 236.0 L404.4 234.0 L405.0 232.0 L406.9 231.0 L409.0 230.5 L411.0 230.1 L413.0 230.0 L415.0 230.7 L417.0 231.0 L419.5 230.3 L422.0 230.5 L424.0 233.0 L426.5 234.5 L428.5 232.8 L430.5 231.0 L432.5 229.0 L434.5 230.0 L436.5 227.5 L440.0 228.5 L442.0 228.4 L444.0 228.5 L443.0 231.5 L442.5 235.0 L446.0 235.0 L449.0 237.0 L450.0 240.0M403.5 216.0 L404.2 218.5 L404.0 221.0 L402.5 224.0 L400.5 226.0 L403.0 229.0 L404.5 232.0 L403.5 235.0 L406.5 237.0 L403.5 238.5 L403.5 240.0M386.0 224.0 L389.0 221.5 L391.0 223.0 L391.9 225.0 L392.5 227.0 L394.2 228.3 L396.0 229.5 L399.0 229.5 L400.5 226.0M403.5 240.0 L403.0 242.0 L405.0 242.8 L407.0 243.5 L409.1 243.7 L410.9 245.0 L413.0 245.2 L415.3 245.4 L417.7 245.5 L420.0 245.0 L422.0 244.4 L424.0 244.3 L426.0 243.9 L428.0 244.0 L430.4 245.0 L433.0 245.5 L435.3 245.1 L437.6 244.7 L440.0 244.8 L442.5 246.1 L445.0 247.5 L448.0 246.0 L450.4 244.8 L452.5 243.0 L450.0 240.0M445.0 247.5 L448.0 249.5 L445.9 249.7 L444.0 250.5 L444.5 254.0 L443.9 256.1 L443.0 258.0 L441.1 259.0 L439.0 259.5 L438.0 263.0 L435.0 262.5 L432.8 263.2 L431.0 264.5 L428.7 265.7 L426.5 267.0 L425.8 269.5 L425.5 272.0 L427.0 275.5 L428.1 277.4 L428.5 279.5 L431.5 281.5 L432.5 285.0 L436.0 284.5 L435.4 281.8 L435.5 279.0 L437.5 276.0 L438.5 273.0 L442.0 271.5 L444.0 270.0M443.0 258.0 L443.3 260.0 L444.0 262.0 L444.2 264.0 L444.6 266.0 L444.0 268.0 L444.5 270.0 L444.6 272.5 L445.0 275.0 L445.3 277.5 L446.0 280.0 L446.1 282.8 L445.5 285.5 L446.5 287.4 L448.0 289.0 L448.7 290.9 L448.4 293.1 L449.0 295.0 L449.4 297.3 L449.8 299.6 L450.0 302.0 L452.2 302.0 L454.5 302.0 L457.0 299.0 L459.5 298.0 L459.6 296.0 L459.0 294.0 L458.1 292.1 L457.5 290.0 L457.9 287.2 L459.0 284.5 L462.0 284.0 L462.4 282.0 L462.4 280.0 L463.0 278.0 L462.7 276.0 L462.7 274.0 L463.0 272.0 L462.9 269.5 L463.5 267.0 L462.0 265.5M444.0 262.0 L447.0 263.0 L448.3 261.3 L450.0 260.0 L452.0 257.5 L453.5 259.0 L456.0 259.0 L456.4 261.5 L456.5 264.0 L460.0 265.5 L462.0 265.5M456.0 259.0 L456.3 257.0 L457.2 255.1 L457.5 253.0 L458.6 250.9 L460.0 249.0 L461.0 247.0 L461.8 244.9 L463.0 243.0 L466.0 244.0 L467.1 242.1 L468.0 240.1 L469.5 238.5 L473.0 238.0 L475.3 238.2 L477.5 238.8 L481.0 237.2 L483.0 239.5 L484.5 240.0 L483.9 242.2 L482.5 244.0 L485.5 246.5 L484.6 248.7 L484.0 251.0 L482.6 253.0 L481.6 255.1 L480.0 257.0 L479.2 259.3 L478.0 261.5 L477.5 264.0 L476.8 266.9 L475.5 269.5 L473.6 268.5 L471.5 268.0 L468.0 267.0 L465.0 267.5 L462.0 265.5M463.0 243.0 L462.2 240.8 L461.5 238.5 L463.0 237.0 L464.5 235.5 L466.4 233.9 L468.0 232.0M484.5 240.0 L485.9 238.4 L487.5 237.0 L489.0 235.5 L490.5 234.0 L491.2 232.0 L491.5 230.0M380.0 260.0 L381.9 260.7 L384.0 260.5 L385.5 263.0 L385.0 265.5M387.0 240.0 L389.0 243.0 L386.0 245.0 L384.0 245.1 L382.0 244.7 L380.0 245.0M383.0 269.0 L382.5 272.0 L383.6 274.1 L385.0 276.0 L384.5 279.5 L388.0 281.0 L388.1 283.5 L388.5 286.0 L388.9 288.0 L389.3 290.0 L389.5 292.0 L390.0 294.0 L390.1 296.0 L390.0 298.0 L390.6 300.5 L390.5 303.0 L387.0 304.5 L385.0 303.5 L384.5 305.5 L384.5 307.5 L386.5 308.5 L386.0 305.0 L389.0 307.0 L390.5 309.5M380.0 304.5 L383.0 305.0 L385.0 303.5M117.0 174.5 L114.9 176.2 L112.5 177.5 L110.5 180.5 L109.5 184.0 L108.2 185.9 L106.5 187.5 L104.5 190.0 L103.5 193.5 L100.0 194.2 L97.5 194.8 L95.0 194.8 L92.9 195.2 L91.0 196.2 L88.9 196.7 L87.0 197.8 L84.5 196.5 L83.5 193.0 L81.0 191.5 L78.0 192.0 L75.0 194.5 L73.9 196.7 L73.0 199.0 L71.8 200.6 L70.5 202.1 L69.0 203.5 L67.1 205.4 L65.0 207.0 L64.5 209.0 L64.0 211.0 L63.8 214.5 L66.0 217.0 L68.1 217.5 L70.0 218.5 L72.5 218.7 L75.0 219.0 L75.4 221.5 L75.5 224.0 L74.1 226.1 L73.5 228.5 L75.0 232.0 L77.5 235.0 L79.8 235.4 L82.0 235.0 L83.5 236.5 L83.5 238.5 L83.5 240.5 L84.9 242.4 L86.0 244.5 L87.5 247.5 L88.5 251.0 L89.2 252.9 L90.5 254.5M164.5 175.0 L164.9 177.0 L165.0 179.0 L166.6 180.4 L168.0 182.0 L171.0 184.5 L173.5 187.5 L173.0 191.0 L171.5 194.0 L175.0 195.5 L176.5 192.0 L178.0 189.5 L180.0 190.1 L181.5 191.5 L183.2 190.4 L185.0 189.5 L188.0 190.0 L187.8 192.0 L187.5 194.0 L188.0 196.0 L188.5 198.0 L191.0 196.0 L194.0 196.0 L194.7 198.5 L195.0 201.0M90.5 254.5 L89.5 256.0 L90.5 259.0 L87.5 260.5 L85.0 262.5 L82.5 261.5 L82.0 259.0 L80.0 259.2 L78.0 259.5 L76.1 260.6 L74.0 261.0 L72.5 263.0 L70.5 263.4 L68.5 263.5 L65.5 261.0 L62.8 261.6 L60.0 261.5 L57.5 261.8 L55.0 262.0 L51.5 261.0 L51.9 263.8 L51.5 266.5 L48.8 266.9 L46.0 266.5 L44.3 267.6 L42.5 268.5 L41.7 270.6 L40.5 272.5 L43.5 274.0 L46.0 277.0 L47.2 278.8 L48.5 280.5 L50.7 282.0 L53.0 283.5 L55.4 285.2 L58.0 286.5 L60.5 287.5 L63.0 288.2 L65.5 288.3 L68.0 288.0 L70.0 287.5 L71.6 286.2 L73.5 285.5 L74.6 283.7 L76.0 282.0 L78.0 280.5 L81.0 281.0 L84.5 281.8 L82.0 284.5 L79.5 287.0 L77.5 288.2 L76.0 290.0 L74.0 292.0 L72.1 293.0 L70.0 293.5 L67.4 294.3 L65.0 295.5 L63.0 296.2 L61.1 297.5 L59.0 298.0 L58.0 296.0 L56.0 294.5 L54.5 297.0 L56.5 300.0 L57.8 301.7 L59.3 303.2 L61.0 304.5 L62.6 306.2 L64.2 308.0 L66.0 309.5 L67.5 311.5 L69.6 313.0 L71.0 315.0 L72.7 316.7 L74.3 318.3 L76.0 320.0 L77.5 321.4 L79.2 322.5 L81.0 323.5 L83.4 325.0 L86.0 326.0 L89.5 325.5 L91.4 324.7 L93.3 324.1 L95.0 323.0 L97.1 322.1 L99.1 321.1 L101.0 320.0 L102.9 318.8 L104.8 317.6 L107.0 317.0 L108.0 314.8 L109.5 313.0 L110.1 311.0 L111.0 309.0 L109.9 307.1 L109.5 305.0 L110.3 303.1 L110.5 301.0 L112.0 297.5 L115.0 297.0 L117.0 297.0 L119.0 297.0 L122.0 297.2 L120.0 299.0 L116.5 299.5 L115.0 302.0 L115.0 305.0 L115.9 307.0 L117.0 309.0 L116.1 311.5 L115.5 314.0 L115.9 316.0 L116.5 318.0 L118.5 320.0 L119.3 322.0 L120.0 324.0 L120.9 325.9 L121.0 328.0 L120.0 329.9 L119.5 332.0 L118.0 335.0M111.0 302.5 L110.0 305.0 L111.5 306.0 L112.5 304.0 L111.0 302.5M90.5 254.5 L92.7 255.0 L95.0 255.0 L97.5 254.6 L100.0 254.2 L102.0 254.0 L104.0 253.9 L106.0 253.5 L108.1 253.9 L110.0 255.0 L111.9 256.7 L114.0 258.0 L116.0 258.0 L118.0 258.5 L120.0 260.0 L123.0 257.5 L124.5 260.0 L123.5 263.0 L126.0 266.0 L129.0 266.0 L128.5 269.5 L130.3 270.7 L131.5 272.5 L133.5 274.0 L133.5 276.0 L137.0 277.5 L139.1 278.6 L141.0 280.0 L142.6 281.6 L144.5 283.0 L146.5 283.5 L149.0 282.0 L151.5 280.5 L149.6 279.7 L148.0 278.5 L150.0 276.0 L152.3 274.9 L154.5 273.5 L155.0 270.0 L155.4 268.0 L155.0 266.0 L154.0 264.3 L153.0 262.5 L152.2 260.0 L151.5 257.5 L153.0 254.0 L154.5 253.5 L153.7 251.5 L153.0 249.5 L156.5 250.0 L159.0 247.5 L162.0 248.0 L160.0 250.5 L159.5 252.5 L161.7 253.2 L164.0 253.5 L166.5 253.2 L169.0 252.5 L170.5 255.5 L168.0 258.5 L169.0 262.0 L168.4 264.2 L168.0 266.5 L166.0 266.9 L164.0 267.5 L165.8 269.0 L167.0 271.0 L168.3 269.3 L170.0 268.0 L171.9 265.9 L174.0 264.0 L176.1 263.4 L178.0 262.5 L180.5 262.1 L183.0 262.0 L186.0 264.0 L188.0 262.5 L187.0 259.0 L188.5 257.3 L190.0 255.5 L189.0 252.5 L186.5 250.5M145.0 283.5 L146.1 285.4 L146.5 287.5 L145.8 289.4 L144.5 291.0 L142.8 292.2 L141.0 293.0 L142.5 296.0 L140.0 298.0 L141.0 300.5 L140.5 304.0 L138.2 304.6 L136.0 305.5 L136.5 308.5 L136.0 311.5 L138.0 311.9 L140.0 312.0 L142.0 311.6 L144.0 311.0 L141.0 310.5 L139.0 313.0 L136.5 315.5 L134.0 318.0 L136.0 320.5 L137.4 322.1 L138.5 324.0 L137.5 325.7 L136.5 327.5 L133.5 328.0 L131.0 325.5 L129.0 328.0 L130.0 331.0 L129.3 333.0 L128.5 335.0M140.5 304.0 L143.2 303.2 L146.0 302.5 L147.5 305.0 L148.0 308.0 L150.6 308.2 L153.0 309.0 L156.5 310.5 L158.5 313.0 L161.2 313.7 L164.0 313.8 L166.0 313.6 L168.0 314.3 L170.0 314.0 L172.5 314.6 L175.0 314.5 L175.7 317.0 L175.5 319.5 L179.0 319.0 L180.7 318.0 L182.5 317.0 L183.0 314.0 L186.0 311.5 L189.0 309.0 L191.1 308.5 L193.0 307.5 L195.0 306.5M119.0 335.0 L121.0 333.5 L124.0 333.0 L125.5 334.5M191.0 160.0 L190.9 162.5 L191.5 165.0 L191.7 167.5 L191.8 170.0 L192.3 172.0 L192.5 174.0 L194.5 177.0 L195.2 179.5 L195.5 182.0 L196.2 183.9 L197.5 185.5 L198.0 189.0 L198.5 192.0 L196.5 194.5 L194.0 196.0M190.0 176.5 L188.0 178.0 L187.5 180.5 L186.5 182.0 L189.0 182.5 L191.5 184.0 L193.5 182.5 L194.5 180.0 L193.0 178.0 L191.5 176.5 L190.0 176.5M195.0 201.0 L197.5 204.0 L199.2 205.3 L200.5 207.0 L199.0 209.5 L200.5 211.5 L198.2 212.9 L196.0 214.5 L196.5 215.5 L198.6 214.2 L201.0 213.5 L203.0 213.0 L205.0 212.5 L207.0 212.6 L209.0 212.0 L210.5 213.5M209.0 213.0 L208.3 214.9 L207.0 216.5 L204.9 217.5 L203.0 219.0 L200.5 220.5 L198.0 222.0 L195.3 223.2 L193.0 225.0 L190.4 226.4 L188.0 228.0 L186.1 229.7 L184.0 231.0 L181.0 233.5 L180.4 235.7 L180.5 238.0 L181.5 239.7 L182.5 241.5 L186.0 242.5 L188.0 242.4 L190.0 243.0 L191.5 241.6 L193.5 241.0 L195.5 240.5 L195.8 242.5 L196.0 244.5 L194.5 246.0 L192.3 246.5 L190.0 247.0 L187.0 249.0 L186.5 250.0M210.5 213.5 L212.8 214.0 L215.0 214.8 L217.0 214.6 L219.0 215.0 L220.8 215.9 L222.5 217.0 L224.5 220.0 L225.0 223.0 L222.5 226.0 L222.4 228.0 L222.0 230.0 L220.5 231.8 L219.5 234.0 L218.5 237.0 L215.0 237.5 L212.5 238.0 L212.1 240.1 L211.0 242.0 L211.6 244.1 L212.5 246.0 L210.5 249.0 L209.5 250.0M218.5 237.0 L221.0 240.0 L220.5 243.0 L222.5 245.5 L225.0 246.0 L227.0 243.0 L229.5 243.0 L229.0 245.5 L232.5 246.0 L236.0 245.5 L237.7 244.2 L239.0 242.5 L240.9 241.4 L243.0 240.8 L245.0 243.0 L246.0 246.0 L244.0 248.0 L246.0 248.1 L248.0 247.5 L251.0 246.0 L253.5 245.0 L253.6 247.0 L254.0 249.0 L256.0 249.6 L258.0 249.5 L259.1 247.4 L260.5 245.5 L262.7 245.0 L265.0 244.8 L268.0 247.0 L269.8 247.9 L271.5 249.0M221.0 240.0 L218.0 239.5 L215.0 240.5 L214.5 243.5 L216.0 247.0 L217.0 250.0M209.5 250.0 L209.3 252.1 L210.0 254.0 L210.2 256.3 L210.5 258.5 L212.5 261.0 L215.0 259.5 L217.1 261.2 L219.0 263.0 L220.7 261.2 L222.5 259.5 L221.8 257.5 L221.5 255.5 L218.5 255.0 L218.4 253.0 L219.0 251.0 L217.0 250.0M269.5 248.0 L271.5 249.0 L274.0 251.0 L277.0 252.5 L278.0 255.5 L280.1 254.2 L282.5 253.5 L285.5 255.0 L285.0 257.0 L285.0 259.0M268.5 290.0 L266.9 291.6 L265.0 293.0 L263.0 292.9 L261.0 293.5 L258.0 295.0 L257.7 297.1 L257.0 299.0 L254.0 301.0 L253.9 303.0 L253.5 305.0 L251.5 308.0 L250.5 311.0 L249.5 314.5 L248.2 316.2 L247.0 318.0 L247.3 320.0 L247.0 322.0 L248.1 324.0 L249.0 326.0 L248.9 328.0 L249.5 330.0M195.0 306.5 L198.0 308.0 L198.0 311.0 L197.0 313.5 L199.3 313.8 L201.7 313.8 L204.0 313.5 L206.0 312.9 L208.0 312.0 L209.9 311.3 L211.5 310.0 L215.0 311.5 L217.5 311.6 L220.0 311.0 L223.0 309.0 L225.0 308.5 L227.0 308.0 L228.9 309.2 L231.0 310.0 L234.0 309.5 L236.4 309.9 L238.5 311.0 L240.8 310.4 L243.0 309.5 L246.0 312.0 L247.8 313.2 L249.5 314.5M311.0 290.0 L308.9 291.3 L307.0 293.0 L309.5 296.0 L312.3 295.6 L315.0 295.0 L317.5 294.6 L320.0 294.5 L322.0 293.9 L324.0 294.0 L323.6 296.0 L324.3 298.0 L324.0 300.0 L327.0 302.0 L329.0 301.0 L331.0 300.0 L333.0 300.6 L335.0 301.5M307.0 293.5 L305.1 295.1 L303.0 296.5 L301.1 297.6 L299.5 299.0 L298.0 302.0 L298.1 304.1 L299.0 306.0 L296.5 309.0 L295.9 311.3 L295.0 313.5 L292.5 316.0 L291.0 318.5 L289.0 317.9 L287.0 317.5 L285.0 318.2 L283.0 318.5 L282.0 320.2 L281.0 322.0 L278.5 323.5 L278.5 327.0 L279.0 330.0M249.5 330.0 L248.5 332.5 L246.0 334.0 L247.5 337.5 L247.0 341.0 L249.5 344.0 L252.5 345.5 L254.5 347.0 L253.0 350.0 L249.5 349.5 L246.5 352.0 L244.5 355.0 L243.5 358.5 L244.0 361.0M244.0 361.0 L241.0 361.5 L238.0 359.0 L237.7 356.8 L237.5 354.5 L238.5 351.0 L237.5 347.5 L235.0 345.0 L233.1 346.0 L231.0 346.5 L229.0 346.4 L227.0 345.8 L225.5 347.5 L222.0 346.0 L220.0 343.5 L217.0 342.0 L215.0 342.0 L213.0 341.5 L211.0 340.5 L210.9 342.5 L211.5 344.5 L210.5 346.3 L209.5 348.0 L209.0 351.0 L206.9 350.7 L205.0 350.0 L203.0 352.5 L202.5 356.0 L204.0 358.5 L201.5 361.0 L200.0 364.0 L198.5 367.5 L197.5 369.5M197.5 369.5 L196.3 367.5 L194.5 366.0 L191.5 368.5 L188.5 371.0 L187.5 374.5 L184.5 375.5 L183.5 378.5 L180.5 378.5 L177.5 381.0 L177.6 383.1 L178.5 385.0 L175.0 385.0M197.5 369.5 L199.0 372.0 L199.0 374.0 L199.0 376.0 L197.5 379.0 L196.5 382.0 L200.0 382.5 L197.5 385.0 L195.0 388.0 L196.5 391.5 L196.8 393.8 L196.5 396.0 L196.0 399.5 L193.5 401.0 L195.5 403.0 L199.0 403.0 L197.5 406.0 L197.5 408.0 L197.0 410.0M244.0 361.0 L247.0 363.0 L250.0 365.0 L252.0 368.0 L252.0 371.0 L255.5 371.5 L256.0 374.5 L256.5 377.5 L254.0 379.0 L254.5 381.5 L257.5 383.0 L261.0 384.5 L259.5 387.0 L256.0 388.0 L252.5 389.5 L249.0 389.0 L246.5 391.5 L245.0 393.5 L247.1 393.9 L249.0 395.0 L248.5 392.0 L245.0 392.0 L243.0 391.5 L240.0 392.0 L239.0 395.0 L238.5 397.5 L235.0 396.0 L233.0 396.9 L231.0 397.5 L227.5 399.0 L226.0 401.0 L226.0 404.0 L224.0 404.6 L222.0 404.5 L219.0 407.0 L218.5 408.5 L215.0 408.0 L212.0 408.5 L209.5 410.0M279.0 330.0 L280.0 333.0 L280.0 335.3 L279.5 337.5 L282.0 337.8 L284.5 338.5 L284.5 341.5 L282.5 342.5 L281.0 340.5 L278.5 341.5 L276.0 339.0 L273.8 337.7 L271.5 336.5 L270.0 338.5 L271.5 340.5 L274.0 342.0 L273.5 345.5 L274.2 347.4 L275.5 349.0 L275.5 351.0 L276.0 353.0 L276.3 355.0 L276.5 357.0 L275.0 360.0 L273.3 361.1 L271.5 362.0 L269.0 365.0 L267.5 366.7 L266.0 368.5 L264.0 370.5 L263.5 374.0 L262.5 377.0 L260.5 377.3 L258.5 377.5 L256.5 377.5M262.5 377.0 L264.7 376.4 L267.0 376.5 L268.6 375.1 L270.5 374.0 L274.0 372.5 L277.0 373.5 L278.5 370.5 L279.1 368.5 L279.0 366.5 L280.5 364.5 L282.5 366.5 L283.0 369.0 L285.5 367.0 L288.0 366.0 L290.5 367.0 L289.9 365.0 L290.0 363.0 L292.0 360.5 L295.0 359.0 L295.5 356.5 L297.5 355.5 L299.5 354.5 L302.0 356.5 L304.5 358.5 L308.0 360.0 L310.0 359.9 L312.0 359.5 L314.5 356.5 L317.0 355.0 L319.0 354.5M335.0 342.5 L332.9 343.2 L331.0 344.5 L329.1 346.2 L327.0 347.5 L325.5 349.0 L323.8 350.3 L322.0 351.5 L320.6 353.1 L319.0 354.5 L317.8 356.5 L316.5 358.5 L314.0 361.5 L312.2 362.7 L311.0 364.5 L309.3 366.1 L308.0 368.0 L305.8 369.0 L304.0 370.5 L302.2 371.9 L300.0 372.5 L298.5 374.5 L296.5 376.0 L295.1 377.6 L294.0 379.5 L291.8 380.5 L290.0 382.0 L287.5 383.5 L285.0 385.0 L283.0 386.4 L281.0 388.0 L278.5 390.0 L277.0 392.5 L277.5 395.5 L276.0 396.5 L278.5 397.5 L277.5 399.5 L275.6 400.6 L273.5 401.0 L271.3 401.8 L269.0 402.5 L266.5 402.4 L264.0 403.0 L261.9 403.5 L260.0 404.5 L258.5 407.5 L257.5 410.0M118.0 335.0 L117.0 337.4 L116.5 340.0 L116.5 342.6 L117.2 345.0 L118.1 347.4 L118.5 350.0 L119.0 352.3 L119.1 354.6 L119.0 357.0 L119.7 359.5 L120.5 362.0 L120.6 364.0 L121.0 366.0 L123.0 369.0 L122.0 371.0 L122.7 373.6 L124.0 376.0 L124.6 378.6 L125.5 381.0 L125.7 383.0 L125.9 385.0 L126.5 387.0 L127.0 389.0 L127.5 391.0 L127.6 393.0 L128.2 395.0 L128.0 397.0 L128.1 399.0 L128.9 401.0 L129.0 403.0 L129.4 405.6 L130.5 408.0 L131.6 410.1 L133.0 412.0 L134.5 415.0M125.5 334.5 L125.0 336.5 L123.0 337.0 L121.2 335.5 L121.5 334.0M125.3 336.0 L128.5 335.0M175.0 385.0 L173.0 385.2 L171.0 385.0 L168.6 384.3 L166.5 383.0 L166.0 386.5 L166.9 388.4 L167.5 390.5 L165.2 390.9 L163.0 391.5 L160.9 392.4 L159.0 393.5 L156.5 392.5 L154.9 394.0 L153.0 395.0 L151.5 396.8 L149.5 398.0 L147.2 398.5 L145.0 399.0 L144.7 401.0 L144.5 403.0 L147.5 405.0 L146.0 408.0 L145.5 411.0 L142.5 413.5 L139.5 414.5 L137.0 413.5 L134.5 414.5M134.5 414.5 L135.6 416.7 L136.5 419.0 L137.5 420.9 L138.0 423.0 L138.9 424.8 L140.0 426.5 L141.5 429.0 L144.0 432.0 L145.5 435.0 L146.6 436.9 L147.0 439.0 L147.9 440.9 L148.5 443.0 L149.5 446.0 L150.5 449.0 L150.8 451.0 L151.0 453.0 L151.0 455.1 L151.5 457.0 L152.0 459.0 L152.2 461.1 L153.0 463.0 L153.5 465.0 L154.7 467.4 L155.5 470.0 L156.9 472.4 L158.0 475.0 L159.2 477.2 L161.0 479.0 L163.0 482.0 L165.0 485.0 L165.8 487.1 L167.0 489.0 L168.5 492.0 L169.5 495.0M144.0 412.5 L144.7 414.7 L145.0 417.0 L145.1 419.0 L144.5 421.0 L144.0 424.5 L142.0 426.5 L141.5 429.0M209.5 410.0 L207.2 410.0 L205.0 410.0 L203.0 409.6 L201.0 409.5 L199.0 409.6 L197.0 409.5 L195.0 409.7 L193.0 409.4 L191.0 409.5 L189.5 412.5 L189.5 416.0 L189.4 418.0 L190.0 420.0 L192.0 421.5 L191.0 424.0 L188.5 424.7 L186.0 425.0 L186.6 427.0 L186.5 429.0 L186.1 431.0 L185.5 433.0 L187.0 436.0 L188.5 439.0 L188.0 442.0 L189.5 445.0 L189.0 447.0 L192.5 446.0 L195.0 444.5 L196.0 442.0 L194.0 440.0 L191.0 440.5 L191.5 438.0 L195.0 437.5 L197.5 438.0 L197.0 441.0 L196.6 443.0 L196.0 445.0 L197.0 448.5 L199.1 447.4 L201.0 446.0 L202.6 444.8 L204.5 444.0 L207.0 446.0 L209.0 449.0 L210.6 450.7 L212.5 452.0 L214.0 455.0 L215.5 456.5 L217.3 457.7 L219.0 459.0 L221.0 458.9 L223.0 459.7 L225.0 459.5 L226.4 457.6 L228.0 456.0 L231.0 454.5 L233.5 455.0 L236.0 455.0 L237.3 453.3 L239.0 452.0 L242.5 452.0 L243.0 455.0 L243.7 456.9 L244.0 459.0M219.0 459.5 L216.9 460.6 L215.0 462.0 L213.1 463.2 L211.0 464.0 L208.0 463.0 L206.0 462.4 L204.0 462.5 L202.0 465.0 L199.0 467.0 L199.3 469.0 L199.5 471.0 L197.5 473.5 L200.0 475.5 L201.5 477.0 L199.9 478.7 L198.0 480.0 L195.5 480.5 L193.0 480.5 L190.8 480.8 L188.5 481.0 L186.7 482.4 L185.0 484.0 L183.0 483.4 L181.0 483.5M153.5 465.0 L155.0 465.0 L157.1 465.7 L159.0 467.0 L160.6 468.4 L162.0 470.0 L163.0 473.0 L165.1 474.3 L167.0 476.0 L168.8 477.4 L171.0 478.0 L174.0 479.0 L177.0 481.0 L179.2 482.0 L181.0 483.5M257.5 410.0 L256.0 412.5 L253.5 413.5 L252.0 411.0 L250.0 411.6 L248.0 411.5 L246.5 413.1 L244.5 414.0 L243.3 416.0 L242.0 418.0 L240.9 419.9 L240.5 422.0 L239.7 423.9 L239.5 426.0 L240.5 429.0 L242.0 432.0 L242.5 435.0 L242.0 438.0 L242.1 440.4 L242.1 442.7 L242.8 445.0 L242.5 447.3 L243.1 449.7 L243.0 452.0 L243.6 454.3 L243.3 456.7 L244.0 459.0 L243.3 460.9 L243.4 463.1 L242.5 465.0 L241.5 466.9 L240.9 469.0 L240.0 471.0 L238.8 473.1 L237.5 475.0 L236.1 477.3 L234.5 479.5 L236.0 482.0 L235.8 484.1 L235.0 486.0 L236.1 487.9 L236.5 490.0 L236.9 492.5 L237.0 495.0M169.5 495.0 L170.5 497.0 L171.4 499.5 L172.0 502.0 L172.3 504.1 L173.6 505.9 L174.0 508.0 L174.1 510.1 L175.2 511.9 L175.5 514.0 L176.1 516.0 L176.2 518.1 L177.0 520.0 L177.4 522.1 L178.4 524.0 L179.0 526.0 L180.8 528.3 L182.0 531.0 L183.5 533.0 L185.0 535.0 L186.6 536.4 L188.0 538.0 L189.8 540.0 L192.0 541.5 L195.0 543.5 L198.0 544.2 L199.9 543.1 L202.0 542.5 L205.0 540.0 L206.7 538.4 L208.5 537.0 L209.1 534.5 L209.0 532.0 L209.5 529.0 L212.5 527.0 L216.0 525.5 L218.4 524.1 L221.0 523.5 L223.0 523.2 L225.0 523.0 L228.5 523.5 L228.0 522.5 L225.3 522.0 L222.5 522.0 L221.0 519.0 L222.5 516.0 L224.5 513.0 L226.0 510.0 L228.0 507.5 L230.1 507.2 L232.0 506.5 L234.5 506.3 L237.0 506.8 L237.5 504.0 L236.6 502.1 L236.5 500.0 L236.4 498.0 L237.0 496.0 L237.0 495.0M181.0 483.5 L179.0 482.0 L176.5 485.0 L179.5 487.5 L181.5 490.5 L180.0 491.5 L181.9 492.6 L184.0 493.0 L184.0 496.0 L185.5 498.0 L186.5 501.0 L186.0 504.0 L187.9 505.3 L189.5 507.0 L192.0 505.5 L193.5 507.5 L193.0 509.7 L193.0 512.0 L192.4 514.0 L192.5 516.0 L194.0 519.0 L196.0 519.5 L194.5 523.0 L193.9 525.0 L193.0 527.0 L193.5 530.0 L192.5 532.5 L194.0 536.0 L192.5 539.0 L192.0 541.5M335.0 301.5 L337.0 302.5 L338.1 300.6 L339.5 299.0 L339.9 296.8 L339.5 294.5 L341.0 293.0 L343.0 294.1 L345.0 295.0 L347.1 295.8 L349.0 297.0 L351.0 297.5 L353.0 295.0 L352.6 297.0 L352.5 299.0 L355.0 302.0 L356.8 302.9 L358.5 304.0 L361.0 304.5 L362.6 306.1 L364.0 308.0 L362.0 310.0M349.0 290.0 L350.5 293.0 L351.2 295.2 L351.0 297.5M390.0 309.0 L389.0 307.0 L387.0 305.0 L386.3 306.9 L386.0 309.0 L385.0 307.0 L382.5 304.0 L379.5 305.0 L377.5 307.0 L377.0 310.0 L374.0 307.5 L375.0 304.0 L375.5 300.5 L373.0 298.5 L375.0 300.0 L373.5 302.5 L371.0 305.5 L368.8 306.5 L367.0 308.0 L364.5 308.9 L362.0 310.0 L359.8 310.9 L358.0 312.5 L355.0 314.0 L353.5 317.0 L354.4 318.9 L354.5 321.0 L355.0 324.0 L357.0 325.5 L354.0 327.5 L354.0 330.0 L351.5 331.5 L351.0 334.0 L348.0 336.5 L345.0 339.0 L343.1 340.0 L341.0 340.5 L339.0 341.2 L336.9 341.5 L335.0 342.5" fill="none" stroke="#bfdfc1" stroke-width="1.15" stroke-linejoin="round" stroke-linecap="round"/>
<g fill="#6fba77" fill-opacity="0.5" stroke="#6fba77" stroke-opacity="0.75" stroke-width="1.3"><circle cx="375.5" cy="231.8" r="12.2"/><circle cx="356.3" cy="270.2" r="10.0"/><circle cx="366.0" cy="279.2" r="11.6"/><circle cx="377.3" cy="291.5" r="26.5"/><circle cx="188.7" cy="179.3" r="10.0"/><circle cx="332.2" cy="315.4" r="10.0"/><circle cx="325.5" cy="327.2" r="13.5"/><circle cx="212.8" cy="387.2" r="10.5"/><circle cx="198.4" cy="461.0" r="48.0"/><circle cx="165.0" cy="433.0" r="17.5"/><circle cx="229.2" cy="466.4" r="17.5"/><circle cx="196.4" cy="492.0" r="10.4"/><circle cx="216.5" cy="499.8" r="10.5"/><circle cx="178.2" cy="514.3" r="12.8"/><circle cx="182.3" cy="524.0" r="10.2"/></g>
</svg>
<!-- /MAP -->
</div>
</body>
</html>
